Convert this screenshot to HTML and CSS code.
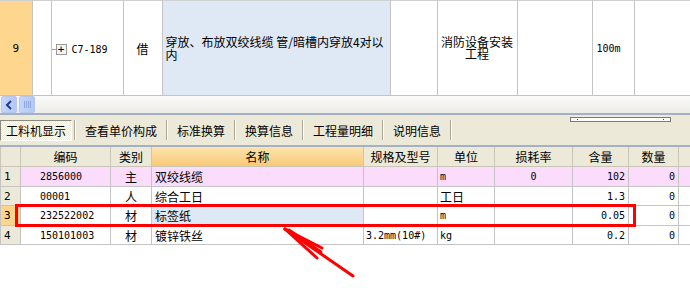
FILE: index.html
```html
<!DOCTYPE html>
<html lang="zh-CN">
<head>
<meta charset="UTF-8" />
<title>工料机显示</title>
<link rel="stylesheet" href="styles.css">
</head>
<body>
  <div class="sheet">
    <table class="quota-grid">
      <colgroup>
        <col style="width:32px"><col style="width:19px"><col style="width:72px"><col style="width:39px">
        <col style="width:228px"><col style="width:47px"><col style="width:80px"><col style="width:75px">
        <col style="width:42px"><col style="width:56px">
      </colgroup>
      <tr>
        <td class="row-head">9</td>
        <td></td>
        <td class="code-cell"><span class="tree-line"></span><span class="expander">+</span><span class="mono">C7-189</span></td>
        <td class="center">借</td>
        <td class="name-cell">穿放、布放双绞线缆 管/暗槽内穿放4对以内</td>
        <td></td>
        <td class="center wrap-cell">消防设备安装<br>工程</td>
        <td></td>
        <td class="mono unit-cell">100m</td>
        <td></td>
      </tr>
    </table>

    <div class="hscroll">
      <span class="scroll-btn">
        <svg width="8" height="10" viewBox="0 0 8 10"><path d="M6 1 L2 5 L6 9" fill="none" stroke="#1c3f8c" stroke-width="2"/></svg>
      </span>
      <span class="scroll-thumb"><i></i><i></i><i></i><i></i></span>
    </div>

    <div class="tabbar">
      <div class="tab active">工料机显示</div>
      <div class="sep"></div>
      <div class="tab">查看单价构成</div>
      <div class="sep"></div>
      <div class="tab">标准换算</div>
      <div class="sep"></div>
      <div class="tab">换算信息</div>
      <div class="sep"></div>
      <div class="tab">工程量明细</div>
      <div class="sep"></div>
      <div class="tab">说明信息</div>
      <div class="sep"></div>
      <div class="mini-bar"><b></b><b></b></div>
    </div>

    <table class="res-grid">
      <colgroup>
        <col style="width:20px"><col style="width:90px"><col style="width:41px"><col style="width:212px">
        <col style="width:74px"><col style="width:57px"><col style="width:78px"><col style="width:56px">
        <col style="width:50px"><col style="width:12px">
      </colgroup>
      <tr class="head">
        <th></th><th>编码</th><th>类别</th><th class="sorted">名称</th><th>规格及型号</th>
        <th>单位</th><th>损耗率</th><th>含量</th><th>数量</th><th></th>
      </tr>
      <tr class="main tall">
        <td class="num">1</td><td class="mono code">2856000</td><td class="center">主</td><td>双绞线缆</td><td></td>
        <td class="mono">m</td><td class="mono center">0</td><td class="mono right">102</td><td class="mono right">0</td><td></td>
      </tr>
      <tr>
        <td class="num">2</td><td class="mono code">00001</td><td class="center">人</td><td>综合工日</td><td></td>
        <td class="unit-cn">工日</td><td></td><td class="mono right">1.3</td><td class="mono right">0</td><td></td>
      </tr>
      <tr class="tall">
        <td class="num current">3</td><td class="mono code">232522002</td><td class="center">材</td><td class="picked">标签纸</td><td></td>
        <td class="mono">m</td><td></td><td class="mono right">0.05</td><td class="mono right">0</td><td></td>
      </tr>
      <tr>
        <td class="num">4</td><td class="mono code">150101003</td><td class="center">材</td><td>镀锌铁丝</td><td class="mono">3.2mm(10#)</td>
        <td class="mono">kg</td><td></td><td class="mono right">0.2</td><td class="mono right">0</td><td></td>
      </tr>
    </table>

    <div class="highlight-box"></div>
    <svg class="arrow" width="90" height="60" viewBox="0 0 90 60">
      <g stroke="#f00" stroke-width="3" stroke-linecap="round" fill="none">
        <path d="M2 2 L70 49"/>
        <path d="M2 2 L39 21"/>
        <path d="M2 2 L34 31"/>
        <path d="M6 3 L38 25"/>
      </g>
    </svg>
  </div>
</body>
</html>
```

FILE: styles.css
```css
body {
  margin: 0;
  background: #fff;
  font-family: "Noto Sans CJK SC", "Liberation Sans", sans-serif;
  font-size: 12px;
  color: #000;
}
.sheet {
  position: relative;
  width: 690px;
  height: 301px;
  overflow: hidden;
}
table {
  border-collapse: collapse;
  table-layout: fixed;
  width: 690px;
}
td, th {
  border: 1px solid #c4c4c4;
  padding: 0;
  overflow: hidden;
  white-space: nowrap;
  line-height: 13px;
}
.mono {
  font-family: "DejaVu Sans Mono", "Liberation Mono", monospace;
  font-size: 10px;
}
.center { text-align: center; }
.right { text-align: right; padding-right: 3px; }

/* upper quota row */
.quota-grid td {
  height: 94px;
  vertical-align: middle;
}
.quota-grid tr td { border-top-color: #d0d0d0; }
.quota-grid .row-head {
  background: #fed68e;
  text-align: center;
  font-family: "DejaVu Sans Mono", monospace;
  font-size: 11px;
  border-left: none;
}
.code-cell span {
  display: inline-block;
  vertical-align: middle;
}
.tree-line {
  width: 4px;
  border-top: 1px solid #a0a0a0;
}
.expander {
  width: 9px;
  height: 9px;
  border: 1px solid #9a9a9a;
  background: #f4f4f4;
  font-family: "DejaVu Sans Mono", monospace;
  font-size: 11px;
  line-height: 9px;
  text-align: center;
  margin-right: 5px;
}
.quota-grid .name-cell {
  background: #dfe8f5;
  white-space: normal;
  padding-left: 3px;
  word-break: break-all;
}
.quota-grid .wrap-cell { line-height: 12px; }
.quota-grid .unit-cell { padding-left: 4px; }

/* horizontal scrollbar */
.hscroll {
  height: 17px;
  display: flex;
  align-items: center;
  gap: 2px;
  padding-left: 1px;
  background: linear-gradient(#fbfbfa, #ecebe6);
  border-bottom: 2px solid #a3b1c4;
}
.scroll-btn, .scroll-thumb {
  width: 14px;
  height: 15px;
  border: 1px solid #b6c7ee;
  border-radius: 2px;
  background: linear-gradient(90deg, #c6d5fa, #b4c8f6);
  display: flex;
  align-items: center;
  justify-content: center;
  gap: 1px;
}
.scroll-thumb i {
  width: 1px;
  height: 7px;
  background: #8ea6e0;
}

/* tab bar */
.tabbar {
  height: 30px;
  background: #ece9d8;
  display: flex;
  align-items: center;
  border-bottom: 2px solid #a3b1c4;
  position: relative;
}
.tab {
  padding: 0 7px;
  height: 19px;
  line-height: 19px;
  font-size: 12px;
}
.tab.active {
  padding: 0 5px;
  width: 60px;
  border-top: 1px solid #8c8a80;
  border-left: 1px solid #8c8a80;
  border-bottom: 1px solid #fff;
  border-right: 1px solid #fff;
  background: repeating-conic-gradient(#fff 0 25%, #ece9d8 0 50%) 0 0 / 2px 2px;
}
.sep {
  width: 1px;
  height: 20px;
  background: #aca899;
  border-right: 1px solid #fff;
  margin: 0 2px;
}
.mini-bar {
  position: absolute;
  left: 570px;
  top: 2px;
  width: 87px;
  height: 3px;
  border: 1px solid #7b7b7b;
  background: #fff;
  display: flex;
  justify-content: space-between;
  align-items: center;
  padding: 0 6px;
}
.mini-bar b {
  width: 1px;
  height: 1px;
  background: #1f3ed0;
}

/* resource grid */
.res-grid th {
  height: 19px;
  background: #ece9d8;
  font-weight: normal;
  font-size: 12px;
  border-color: #c9c6b8;
  border-top: none;
}
.res-grid th.sorted {
  background: linear-gradient(#fde3ad, #f9c977);
}
.res-grid td {
  height: 18px;
}
.res-grid tr.tall td {
  height: 19px;
}
.res-grid td.num {
  background: #ece9d8;
  font-family: "DejaVu Sans Mono", monospace;
  font-size: 11px;
  padding-left: 3px;
}
.res-grid td.num.current { background: #fdd48c; }
.res-grid td.code { padding-left: 19px; }
.res-grid td:nth-child(4) { padding-left: 3px; }
.res-grid td:nth-child(5), .res-grid td:nth-child(6) { padding-left: 2px; }
.res-grid tr.main td:not(.num) { background: #fcdcfc; }
.res-grid td.picked { background: #dfe8f5; }
.res-grid .unit-cn { font-size: 12px; }

/* annotation overlay */
.highlight-box {
  position: absolute;
  left: 15px;
  top: 204px;
  width: 615px;
  height: 17px;
  border: 3px solid #f00;
}
.arrow {
  position: absolute;
  left: 283px;
  top: 227px;
}
```
